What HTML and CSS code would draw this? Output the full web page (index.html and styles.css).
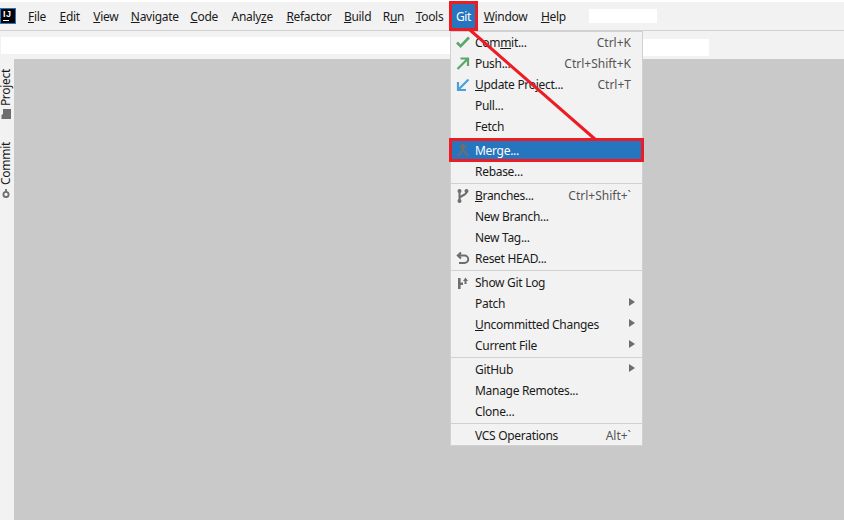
FILE: index.html
```
<!DOCTYPE html>
<html lang="en">
<head>
<meta charset="utf-8">
<title>IntelliJ IDEA Git menu</title>
<link rel="stylesheet" href="styles.css">
</head>
<body>
<div class="app">
  <header class="menubar">
    <div class="logo"><span class="logo-text">IJ</span><span class="logo-bar"></span></div>
    <nav class="menus">
      <span class="m m-wide"><u>F</u>ile</span>
      <span class="m m-wide"><u>E</u>dit</span>
      <span class="m"><u>V</u>iew</span>
      <span class="m m-tight"><u>N</u>avigate</span>
      <span class="m m-wide"><u>C</u>ode</span>
      <span class="m m-wide">Analy<u>z</u>e</span>
      <span class="m"><u>R</u>efactor</span>
      <span class="m m-tight"><u>B</u>uild</span>
      <span class="m m-tight">R<u>u</u>n</span>
      <span class="m"><u>T</u>ools</span>
      <span class="m m-active">Git</span>
      <span class="m m-wide"><u>W</u>indow</span>
      <span class="m"><u>H</u>elp</span>
    </nav>
    <div class="title-blank"></div>
  </header>
  <div class="toolbar">
    <div class="field-left"></div>
    <div class="field-right"></div>
  </div>
  <div class="workspace">
    <aside class="sidebar">
      <div class="vtab vtab-project"><span>Project</span>
        <svg class="vicon" width="12" height="12" viewBox="0 0 12 12"><path fill="#6e6e6e" d="M1 1.5h4l1 1.5h5v8H1z"/></svg>
      </div>
      <div class="vtab vtab-commit"><span>Commit</span>
        <svg class="vicon" width="12" height="12" viewBox="0 0 12 12"><circle cx="4.5" cy="6" r="2.6" fill="none" stroke="#6e6e6e" stroke-width="1.8"/><path stroke="#6e6e6e" stroke-width="1.8" d="M7 6H10"/></svg>
      </div>
    </aside>
    <main class="editor"></main>
  </div>

  <div class="dropdown">
    <div class="group">
      <div class="row"><span class="ic"><svg width="16" height="16" viewBox="0 0 16 16"><path fill="none" stroke="#59a869" stroke-width="2.6" d="M2 7.5l3.6 3.6L14 2.5"/></svg></span><span class="lbl">Com<span class="und">m</span>it...</span><span class="sc">Ctrl+K</span></div>
      <div class="row"><span class="ic"><svg width="16" height="16" viewBox="0 0 16 16"><path fill="none" stroke="#59a869" stroke-width="2.2" d="M2.5 13L12.5 3M5.5 2.5h7.5V10"/></svg></span><span class="lbl">Push...</span><span class="sc">Ctrl+Shift+K</span></div>
      <div class="row"><span class="ic"><svg width="16" height="16" viewBox="0 0 16 16"><path fill="none" stroke="#4b9fdb" stroke-width="2.2" d="M13.5 2.5L3.5 12.5M3 5v8h8"/></svg></span><span class="lbl"><u>U</u>pdate Project...</span><span class="sc">Ctrl+T</span></div>
      <div class="row"><span class="ic"></span><span class="lbl">Pull...</span></div>
      <div class="row"><span class="ic"></span><span class="lbl">Fetch</span></div>
    </div>
    <div class="group">
      <div class="row row-sel"><span class="ic"><svg width="16" height="16" viewBox="0 0 16 16"><path fill="none" stroke="#6e6e6e" stroke-width="2" d="M8 2v5M8 7l-5 6M8 7l5 6M4.5 5L8 1.7 11.5 5"/></svg></span><span class="lbl">Merge...</span></div>
      <div class="row"><span class="ic"></span><span class="lbl">Rebase...</span></div>
    </div>
    <div class="group">
      <div class="row"><span class="ic"><svg width="16" height="16" viewBox="0 0 16 16"><g fill="#6e6e6e"><circle cx="4.5" cy="3" r="2"/><circle cx="4.5" cy="13" r="2"/><circle cx="11.5" cy="3" r="2"/></g><path fill="none" stroke="#6e6e6e" stroke-width="2" d="M4.5 4v8M11.5 4c0 3.5-7 3.5-7 6.5"/></svg></span><span class="lbl"><u>B</u>ranches...</span><span class="sc">Ctrl+Shift+`</span></div>
      <div class="row"><span class="ic"></span><span class="lbl">New Branch...</span></div>
      <div class="row"><span class="ic"></span><span class="lbl">New Tag...</span></div>
      <div class="row"><span class="ic"><svg width="16" height="16" viewBox="0 0 16 16"><path fill="none" stroke="#6e6e6e" stroke-width="2" d="M6 1.5L2.8 4.5 6 7.5M3 4.5h6.5a3.5 3.5 0 0 1 0 7.5H4"/></svg></span><span class="lbl">Reset HEAD...</span></div>
    </div>
    <div class="group">
      <div class="row"><span class="ic"><svg width="16" height="16" viewBox="0 0 16 16"><path fill="#6e6e6e" d="M3 3h2.6v4.5H8V10H5.6v4H3zM9.5 9V6H8l2.5-3.5L13 6h-1.5v3z"/></svg></span><span class="lbl">Show Git Log</span></div>
      <div class="row"><span class="ic"></span><span class="lbl">Patch</span><span class="arrow"></span></div>
      <div class="row"><span class="ic"></span><span class="lbl"><u>U</u>ncommitted Changes</span><span class="arrow"></span></div>
      <div class="row"><span class="ic"></span><span class="lbl">Current File</span><span class="arrow"></span></div>
    </div>
    <div class="group">
      <div class="row"><span class="ic"></span><span class="lbl">GitHub</span><span class="arrow"></span></div>
      <div class="row"><span class="ic"></span><span class="lbl">Manage Remotes...</span></div>
      <div class="row"><span class="ic"></span><span class="lbl">Clone...</span></div>
    </div>
    <div class="group">
      <div class="row"><span class="ic"></span><span class="lbl">VCS Operations</span><span class="sc">Alt+`</span></div>
    </div>
  </div>

  <svg class="callout-line" width="844" height="520" viewBox="0 0 844 520"><path stroke="#ed1c24" stroke-width="3" fill="none" d="M470 30L596 140"/></svg>
  <div class="callout-git"></div>
  <div class="callout-merge"></div>
</div>
</body>
</html>
```
FILE: styles.css
```
* { box-sizing: border-box; }
html, body { margin: 0; padding: 0; }
body { width: 844px; height: 520px; overflow: hidden; background: #f2f2f2; font-family: "Noto Sans", "Open Sans", sans-serif; font-size: 12px; color: #1a1a1a; letter-spacing: -0.3px; }
.app { position: relative; width: 844px; height: 520px; display: flex; flex-direction: column; }
.menubar { height: 31px; background: #f2f2f2; border-top: 2px solid #fff; border-bottom: 1px solid #d1d1d1; display: flex; align-items: center; }
.logo { width: 16px; height: 16px; background: #000; border: 1px solid #2675bf; position: relative; color: #fff; flex: none; }
.logo-text { position: absolute; left: 2px; top: 1px; font: bold 9px/9px "Liberation Sans", sans-serif; letter-spacing: 0.5px; }
.logo-bar { position: absolute; left: 2px; bottom: 2px; width: 6px; height: 1px; background: #fff; }
.menus { display: flex; margin-left: 5.75px; align-items: center; }
.m { padding: 0 6.25px; line-height: 27px; height: 27px; white-space: nowrap; }
.m-wide { padding-right: 7.25px; }
.m-tight { padding-right: 5.25px; }
.m-active { background: #2675bf; color: #fff; }
.title-blank { width: 68px; height: 14px; background: #fff; margin-left: 17px; }
.toolbar { height: 28px; flex: none; display: flex; align-items: center; background: #f2f2f2; padding-left: 1px; position: relative; }
.field-left { width: 449px; height: 17px; background: #fff; }
.field-right { width: 69px; height: 17px; background: #fff; margin-left: 190px; margin-top: 4px; }
.workspace { flex: 1; display: flex; min-height: 0; }
.sidebar { width: 14px; background: #f2f2f2; flex: none; display: flex; flex-direction: column; align-items: flex-start; }
.vtab { writing-mode: vertical-rl; transform: rotate(180deg); display: flex; align-items: center; gap: 2px; line-height: 12px; width: 12px; }
.vtab-project { margin-top: 10px; flex-direction: row-reverse; }
.vtab-commit { margin-top: 22px; flex-direction: row-reverse; }
.vicon { transform: rotate(180deg) rotate(-90deg); flex: none; }
.editor { flex: 1; background: #c9c9c9; }
.dropdown { position: absolute; left: 450px; top: 31px; width: 193px; height: 415px; background: #f2f2f2; border: 1px solid #d1d1d1; }
.group { border-top: 1px solid #d1d1d1; padding: 1px 0; }
.group:first-child { border-top: 0; padding-top: 0; }
.row { height: 21px; display: flex; align-items: center; position: relative; padding-right: 11px; white-space: nowrap; }
.row-sel { background: #2675bf; color: #fff; }
.ic { width: 24px; flex: none; display: flex; justify-content: center; }
.lbl { flex: 1; }
.und { text-decoration: underline; }
.sc { color: #555; letter-spacing: 0; }
.arrow { width: 0; height: 0; border-left: 6px solid #6e6e6e; border-top: 4px solid transparent; border-bottom: 4px solid transparent; margin-right: -4px; margin-top: -3px; }
.callout-line { position: absolute; left: 0; top: 0; pointer-events: none; }
.callout-git { position: absolute; left: 449px; top: 1px; width: 29px; height: 30px; border: 3px solid #ed1c24; }
.callout-merge { position: absolute; left: 449px; top: 138px; width: 195px; height: 24px; border: 3px solid #ed1c24; }
```
